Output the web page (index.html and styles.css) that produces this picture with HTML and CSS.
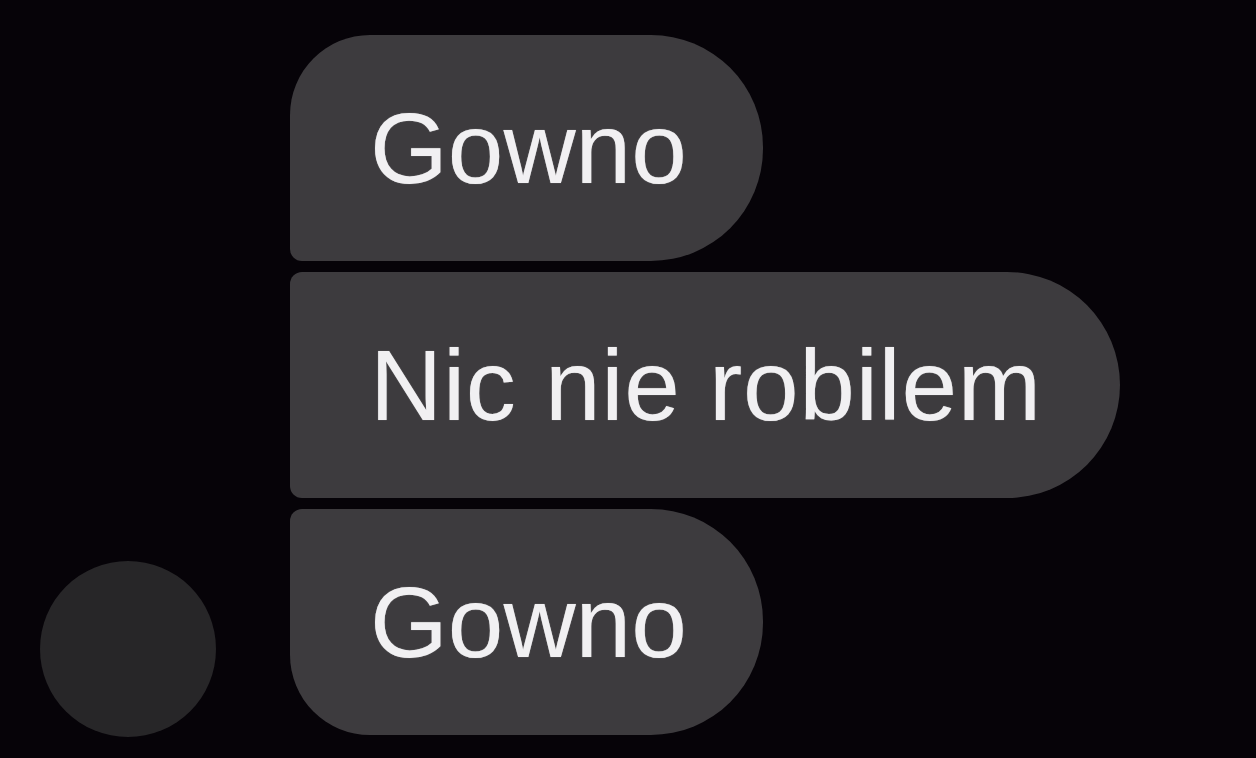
FILE: index.html
```html
<!DOCTYPE html>
<html lang="pl">
<head>
<meta charset="utf-8">
<title>Chat</title>
<link rel="stylesheet" href="styles.css">
</head>
<body>
<main class="chat">
  <div class="avatar"></div>
  <div class="messages">
    <div class="bubble first">Gowno</div>
    <div class="bubble middle">Nic nie robilem</div>
    <div class="bubble last">Gowno</div>
  </div>
</main>
</body>
</html>
```
FILE: styles.css
```css
html, body {
  margin: 0;
  padding: 0;
  background: #060308;
  width: 1256px;
  height: 758px;
  overflow: hidden;
}

.chat {
  display: flex;
  align-items: flex-end;
  gap: 74px;
  padding: 35px 0 0 40px;
  font-family: "Liberation Sans", Arial, sans-serif;
}

.avatar {
  width: 176px;
  height: 176px;
  border-radius: 50%;
  background: #272628;
  margin-bottom: -2px;
  flex: none;
}

.messages {
  display: flex;
  flex-direction: column;
  align-items: flex-start;
  gap: 11px;
}

.bubble {
  background: #3d3b3e;
  color: #f1f0f2;
  font-size: 100px;
  line-height: 226px;
  height: 226px;
  padding: 0 76px 0 80px;
  white-space: nowrap;
  text-shadow: 0 0 1px rgba(241, 240, 242, 0.6);
}

.first {
  border-radius: 80px 112px 112px 12px;
}

.middle {
  border-radius: 12px 113px 113px 12px;
  letter-spacing: 0.7px;
  padding-right: 78px;
}

.last {
  border-radius: 12px 112px 112px 80px;
}
```
